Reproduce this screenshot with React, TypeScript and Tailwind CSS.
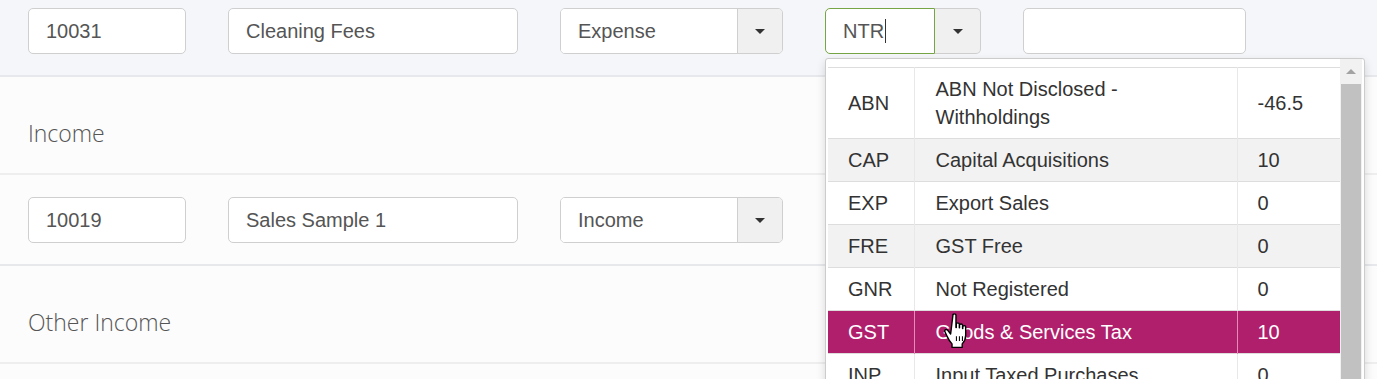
import { ReactNode } from "react";

const font = "font-['Liberation_Sans',Arial,sans-serif]";

const Caret = () => (
  <span className="block w-0 h-0 border-l-[5px] border-r-[5px] border-t-[5px] border-l-transparent border-r-transparent border-t-[#333]" />
);

const TextBox = ({ value, w }: { value?: string; w: string }) => (
  <div
    className={`${w} h-[46px] shrink-0 flex items-center px-[17px] bg-white border border-[#cfcfcf] rounded-[5px] text-[20px] text-[#555] ${font}`}
  >
    {value}
  </div>
);

const Select = ({ value }: { value: string }) => (
  <div className={`w-[223px] h-[46px] shrink-0 flex border border-[#cfcfcf] rounded-[5px] overflow-hidden ${font}`}>
    <div className="flex-1 flex items-center px-[17px] bg-white text-[20px] text-[#555]">{value}</div>
    <div className="w-[45px] flex items-center justify-center bg-[#f0f0f0] border-l border-[#cfcfcf]">
      <Caret />
    </div>
  </div>
);

const Row = ({ children, top }: { children: ReactNode; top?: boolean }) => (
  <div
    className={`flex items-center gap-[42px] pl-[28px] border-b-2 border-[#e6e8eb] ${
      top ? "pt-[8px] pb-[21px] bg-[#f4f6f9]" : "pt-[22px] pb-[21px]"
    }`}
  >
    {children}
  </div>
);

const Heading = ({ text }: { text: string }) => (
  <div className="h-[98px] flex items-center pl-[28px] border-b-2 border-[#eeeeee]">
    <span className="font-['Open_Sans',sans-serif] font-light text-[23px] text-[#555] pt-[16px]">{text}</span>
  </div>
);

const codes = [
  { code: "ABN", name: "ABN Not Disclosed - Withholdings", rate: "-46.5" },
  { code: "CAP", name: "Capital Acquisitions", rate: "10" },
  { code: "EXP", name: "Export Sales", rate: "0" },
  { code: "FRE", name: "GST Free", rate: "0" },
  { code: "GNR", name: "Not Registered", rate: "0" },
  { code: "GST", name: "Goods & Services Tax", rate: "10" },
  { code: "INP", name: "Input Taxed Purchases", rate: "0" },
];

const HandCursor = () => (
  <svg width="28" height="37" viewBox="0 0 21 32" className="absolute left-[117px] top-[253px]">
    <path
      d="M7 2.5c0-1.2 2.6-1.2 2.6 0v11l0.3 0v-3.2c0-1.2 2.6-1.2 2.6 0v3.4h0.2v-2.4c0-1.2 2.6-1.2 2.6 0v3h0.2v-1.6c0-1.2 2.5-1.2 2.5 0v7.3c0 3.5-1.4 5.8-3 7.6v3h-8.8v-3c-1.6-1.8-3.4-4.6-4.6-7.2l-1.6-3.6c-0.6-1.2 1.4-2.4 2.5-1l2.5 3.2z"
      fill="#fff"
      stroke="#000"
      strokeWidth="1.2"
      strokeLinejoin="round"
    />
    <path d="M10 21v4M12.6 21v4M15.2 21v4" stroke="#000" strokeWidth="0.9" />
  </svg>
);

const Dropdown = () => (
  <div className="absolute left-0 top-[50px] w-[540px] h-[330px] bg-white border border-[#cccccc] rounded-[3px] shadow-[0_4px_10px_rgba(0,0,0,0.15)] flex overflow-hidden">
    <div className="relative w-[514px] pt-[8px] pl-[2px]">
      <table className={`w-[512px] border-collapse text-[20px] leading-[28px] text-[#333] ${font}`}>
        <colgroup>
          <col className="w-[86px]" />
          <col className="w-[323px]" />
          <col className="w-[103px]" />
        </colgroup>
        <tbody>
          {codes.map((c, i) => {
            const active = c.code === "GST";
            const bg = active ? "bg-[#b01f6c] text-white" : i % 2 === 1 ? "bg-[#f2f2f2]" : "bg-white";
            const vline = active ? "border-[#e58ab9]" : "border-[#e8e8e8]";
            return (
              <tr key={c.code} className={`${bg} border-t border-[#dddddd]`}>
                <td className={`px-[20px] py-[7px] align-middle border-r ${vline}`}>{c.code}</td>
                <td className={`px-[21px] py-[7px] align-middle border-r ${vline}`}>
                  {c.code === "ABN" ? (
                    <>
                      ABN Not Disclosed -<br />
                      Withholdings
                    </>
                  ) : (
                    c.name
                  )}
                </td>
                <td className="px-[20px] py-[7px] align-middle">{c.rate}</td>
              </tr>
            );
          })}
        </tbody>
      </table>
      <HandCursor />
    </div>
    <div className="w-[22px] flex flex-col bg-[#f1f1f1]">
      <div className="h-[25px] flex items-center justify-center">
        <span className="block w-0 h-0 border-l-[5px] border-r-[5px] border-b-[5px] border-l-transparent border-r-transparent border-b-[#a3a3a3]" />
      </div>
      <div className="flex-1 mx-[1px] bg-[#c1c1c1]" />
    </div>
  </div>
);

export default function App() {
  return (
    <div className="w-[1377px] h-[379px] overflow-hidden bg-[#fcfcfc]">
      <Row top>
        <TextBox value="10031" w="w-[158px]" />
        <TextBox value="Cleaning Fees" w="w-[290px]" />
        <Select value="Expense" />
        <div className="relative w-[156px] h-[46px] shrink-0 flex">
          <div
            className={`w-[110px] flex items-center px-[17px] bg-white border border-[#76a545] rounded-l-[5px] text-[20px] text-[#555] ${font}`}
          >
            NTR<span className="inline-block w-px h-[24px] bg-[#333] ml-px" />
          </div>
          <div className="flex-1 flex items-center justify-center bg-[#f0f0f0] border border-l-0 border-[#cfcfcf] rounded-r-[5px]">
            <Caret />
          </div>
          <Dropdown />
        </div>
        <TextBox w="w-[223px]" />
      </Row>
      <Heading text="Income" />
      <Row>
        <TextBox value="10019" w="w-[158px]" />
        <TextBox value="Sales Sample 1" w="w-[290px]" />
        <Select value="Income" />
      </Row>
      <Heading text="Other Income" />
    </div>
  );
}
